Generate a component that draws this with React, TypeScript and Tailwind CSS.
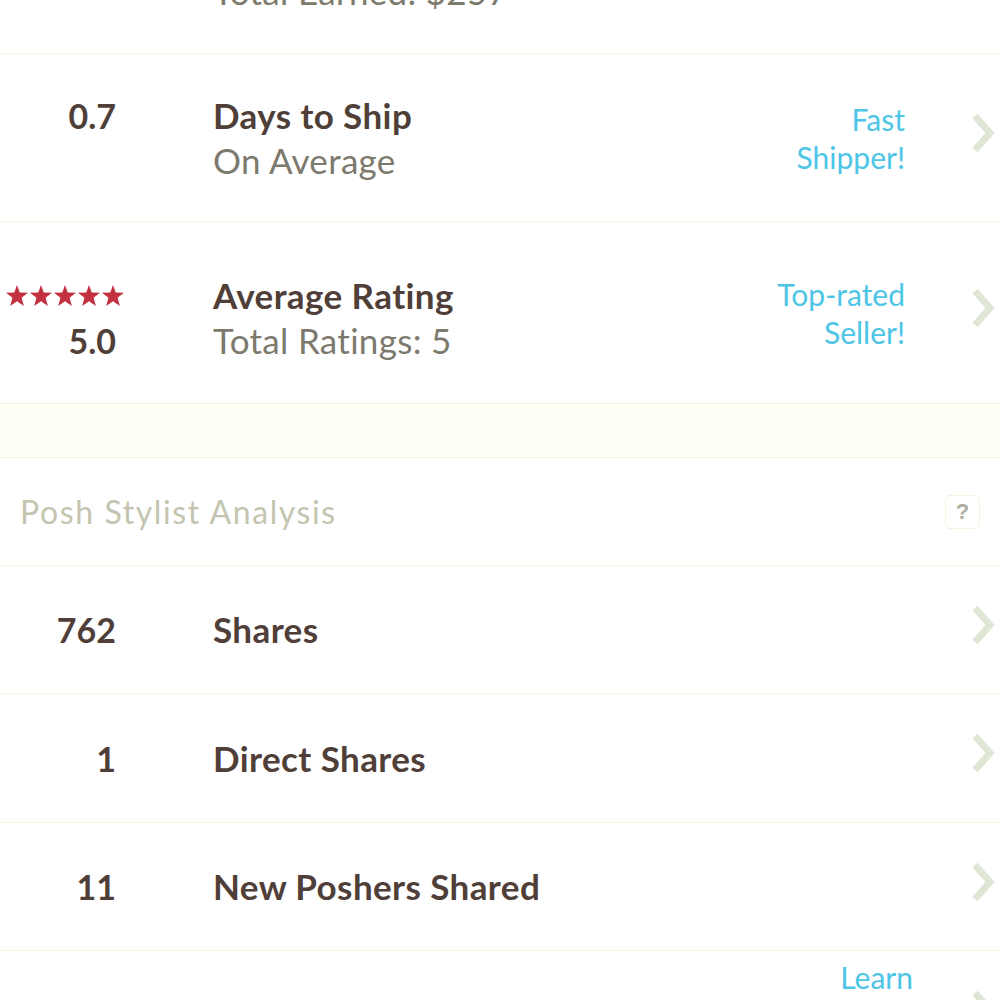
import React from 'react';

const font = { fontFamily: 'Lato, "Open Sans", sans-serif' };

/**
 * Light chevron used at the right edge of each stat row
 */
const Chevron = () => (
  <svg width="24" height="40" viewBox="0 0 24 40" className="-mt-[10px]">
    <polyline
      points="4,3 19,20 4,37"
      fill="none"
      stroke="#dfe6d5"
      strokeWidth="7"
      strokeLinejoin="miter"
    />
  </svg>
);

const Star = () => (
  <svg width="22" height="21" viewBox="0 0 24 23">
    <polygon
      points="12,0 15,8.3 24,8.6 17,14 19.5,23 12,17.8 4.5,23 7,14 0,8.6 9,8.3"
      fill="#c1313f"
    />
  </svg>
);

interface StatRowProps {
  value?: React.ReactNode;
  title: string;
  subtitle?: string;
  badge?: string[];
  height: string;
  shift?: string;
  badgeShift?: string;
}

const StatRow = ({ value, title, subtitle, badge, height, shift = '', badgeShift = '' }: StatRowProps) => (
  <div className={`flex items-center border-b border-[#f4f4e3] ${height}`}>
    <div className={`flex flex-1 items-start ${shift}`}>
      <div className="w-[116px] shrink-0 text-right text-[34px] font-bold leading-[45px] text-[#4f3f38]">
        {value}
      </div>
      <div className="pl-[97px]">
        <div className="text-[35px] font-bold leading-[45px] tracking-[0.4px] text-[#4f3f38]">{title}</div>
        {subtitle && (
          <div className="text-[35px] leading-[45px] tracking-[0.3px] text-[#7c796d]">{subtitle}</div>
        )}
      </div>
    </div>
    <div className={`text-right text-[30px] leading-[38px] text-[#4dc5e6] ${badgeShift}`}>
      {badge?.map((line) => (
        <div key={line}>{line}</div>
      ))}
    </div>
    <div className="flex w-[95px] shrink-0 pl-[66px]">
      <Chevron />
    </div>
  </div>
);

export default function App() {
  return (
    <div className="h-[1000px] w-[1000px] overflow-hidden bg-white" style={font}>
      <div className="-mt-[115px]">
        <StatRow
          value="3"
          title="Sales"
          subtitle="Total Earned: $257"
          height="h-[169px]"
        />
        <StatRow
          value="0.7"
          title="Days to Ship"
          subtitle="On Average"
          badge={['Fast', 'Shipper!']}
          height="h-[168px]"
        />
        <StatRow
          value={
            <>
              <div className="-mr-[8px] flex h-[45px] items-center justify-end gap-[2px]">
                <Star />
                <Star />
                <Star />
                <Star />
                <Star />
              </div>
              <div>5.0</div>
            </>
          }
          title="Average Rating"
          subtitle="Total Ratings: 5"
          badge={['Top-rated', 'Seller!']}
          height="h-[182px]"
          shift="pt-[10px]"
        />

        {/* Band between sections */}
        <div className="h-[54px] border-b border-[#f4f4e3] bg-[#fffff5]" />

        {/* Section header */}
        <div className="flex h-[108px] items-center justify-between border-b border-[#f4f4e3] pl-[20px] pr-[20px]">
          <span className="text-[32px] tracking-[1.6px] text-[#c4c5b0]">Posh Stylist Analysis</span>
          <span
            className="flex h-[34px] w-[35px] items-center justify-center rounded-[5px] border border-[#f3f3e2] text-[22px] font-bold text-[#acaca3]"
            style={{ fontFamily: '"Liberation Sans", Arial, sans-serif' }}
          >
            ?
          </span>
        </div>

        <StatRow value="762" title="Shares" height="h-[128px]" />
        <StatRow value="1" title="Direct Shares" height="h-[129px]" />
        <StatRow value="11" title="New Poshers Shared" height="h-[128px]" />
        <StatRow
          value="0"
          title="Poshers Rewarded"
          badge={['Learn', 'More']}
          height="h-[128px]"
          shift="pt-[60px]"
          badgeShift="-translate-y-[19px] translate-x-[8px]"
        />
      </div>
    </div>
  );
}
